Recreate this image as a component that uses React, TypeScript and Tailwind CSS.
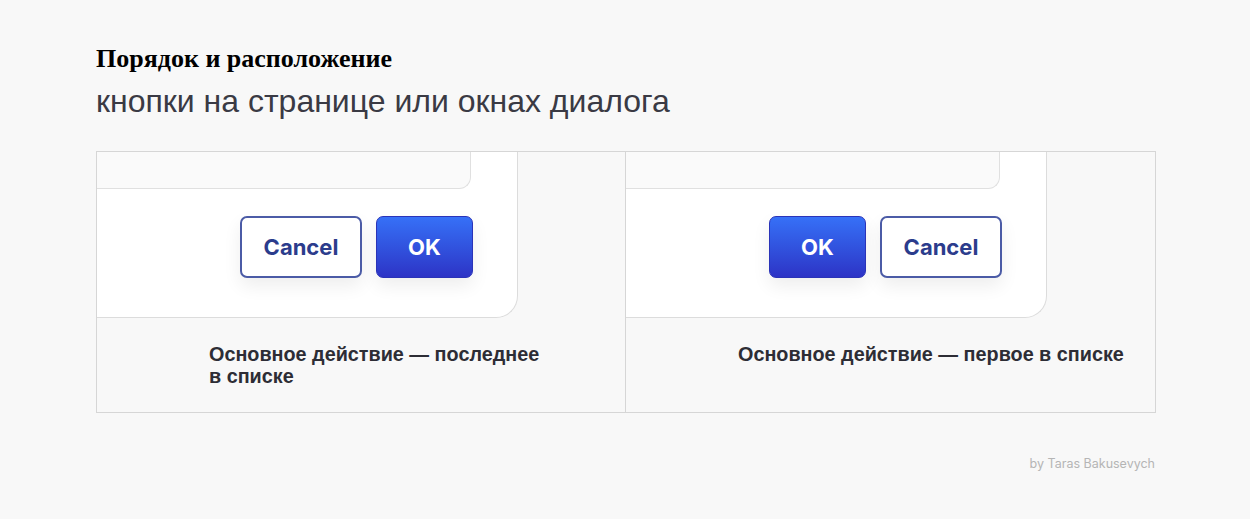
const Cancel = () => (
  <button className="flex h-[62px] w-[122px] items-center justify-center rounded-[7px] border-2 border-[#4b5ba6] bg-white text-[22px] font-bold text-[#2b3c8c] shadow-[0_8px_18px_rgba(0,0,0,0.07)] [font-family:Inter,'Liberation_Sans',sans-serif]">
    Cancel
  </button>
);

const Ok = () => (
  <button className="flex h-[62px] w-[97px] items-center justify-center rounded-[7px] border border-[#2a33b8] bg-gradient-to-b from-[#3670f7] to-[#2d33c6] text-[22px] font-bold text-white shadow-[0_8px_18px_rgba(0,0,0,0.07)] [font-family:Inter,'Liberation_Sans',sans-serif]">
    OK
  </button>
);

const Panel = ({
  primaryFirst,
  caption,
}: {
  primaryFirst: boolean;
  caption: React.ReactNode;
}) => (
  <div className="flex flex-col">
    <div className="h-[167px]">
      <div className="flex h-[166px] w-[421px] flex-col rounded-br-[22px] border-r border-b border-[#dcdcdc] bg-white">
        <div className="h-[37px] w-[374px] rounded-br-[12px] border-r border-b border-[#e0e0e0] bg-[#fafafa]" />
        <div className="mt-[27px] flex w-[376px] justify-end gap-[14px]">
          {primaryFirst ? (
            <>
              <Ok />
              <Cancel />
            </>
          ) : (
            <>
              <Cancel />
              <Ok />
            </>
          )}
        </div>
      </div>
    </div>
    <p className="mt-[24px] pl-[112px] text-[19.8px] leading-[22px] font-bold text-[#2d2d35] [font-family:'Liberation_Sans',Arial,sans-serif]">
      {caption}
    </p>
  </div>
);

export default function App() {
  return (
    <div className="relative h-[519px] w-full bg-[#f8f8f8] px-[96px] pt-[45px]">
      <h1 className="text-[26px] leading-[28px] font-bold text-black [font-family:'Liberation_Serif','Times_New_Roman',serif]">
        Порядок и расположение
      </h1>
      <h2 className="mt-[9px] text-[32px] leading-[38px] text-[#3a3a44] [font-family:'Liberation_Sans',Arial,sans-serif]">
        кнопки на странице или окнах диалога
      </h2>
      <div className="mt-[31px] grid h-[262px] w-[1060px] grid-cols-2 border border-[#d6d6d6]">
        <div className="border-r border-[#d6d6d6]">
          <Panel
            primaryFirst={false}
            caption={
              <>
                Основное действие — последнее
                <br />в списке
              </>
            }
          />
        </div>
        <div>
          <Panel primaryFirst caption="Основное действие — первое в списке" />
        </div>
      </div>
      <div className="mt-[43px] flex w-[1059px] justify-end text-[12.5px] leading-[16px] text-[#b5b5b5] [font-family:Inter,'Liberation_Sans',sans-serif]">
        by Taras Bakusevych
      </div>
    </div>
  );
}
